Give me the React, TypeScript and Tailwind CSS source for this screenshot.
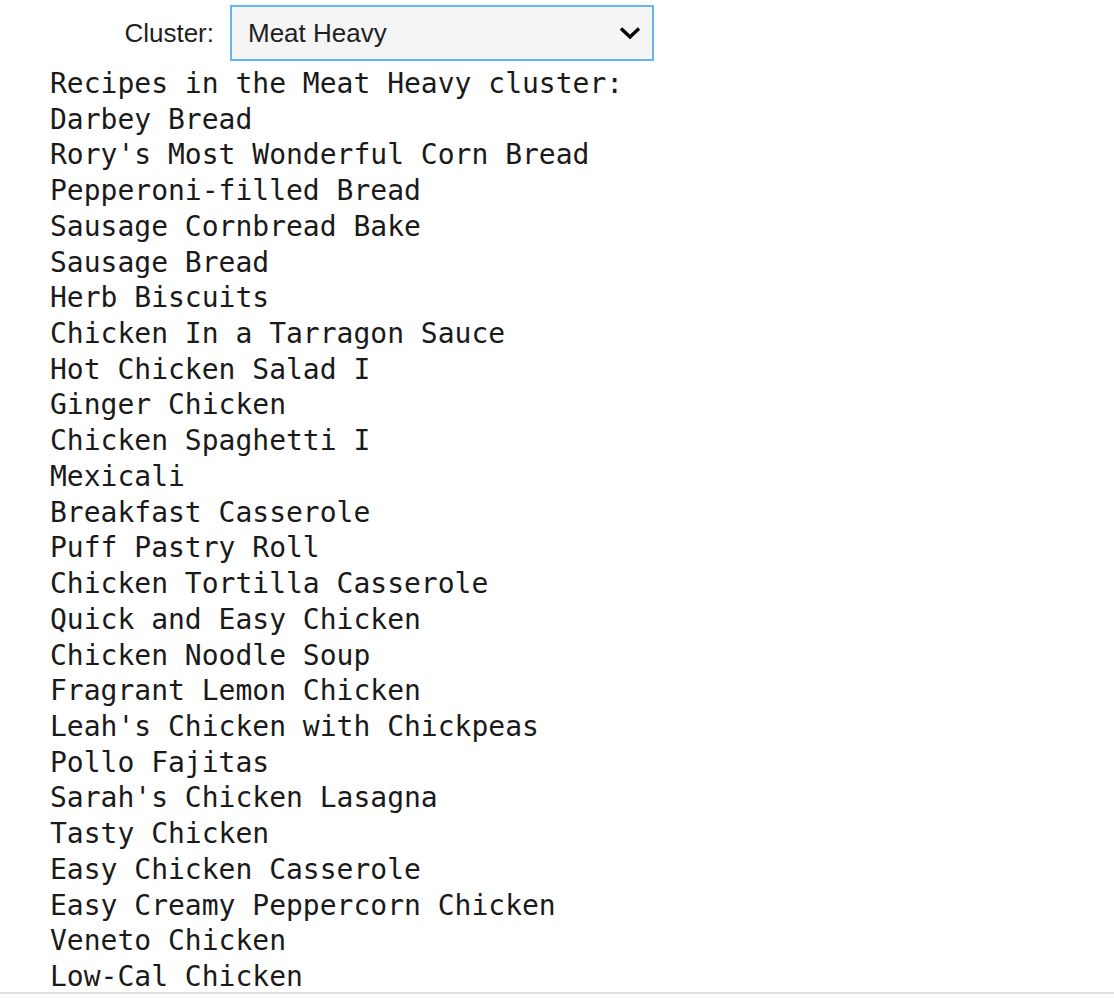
import React from 'react';

const recipes: string[] = [
  'Darbey Bread',
  "Rory's Most Wonderful Corn Bread",
  'Pepperoni-filled Bread',
  'Sausage Cornbread Bake',
  'Sausage Bread',
  'Herb Biscuits',
  'Chicken In a Tarragon Sauce',
  'Hot Chicken Salad I',
  'Ginger Chicken',
  'Chicken Spaghetti I',
  'Mexicali',
  'Breakfast Casserole',
  'Puff Pastry Roll',
  'Chicken Tortilla Casserole',
  'Quick and Easy Chicken',
  'Chicken Noodle Soup',
  'Fragrant Lemon Chicken',
  "Leah's Chicken with Chickpeas",
  'Pollo Fajitas',
  "Sarah's Chicken Lasagna",
  'Tasty Chicken',
  'Easy Chicken Casserole',
  'Easy Creamy Peppercorn Chicken',
  'Veneto Chicken',
  'Low-Cal Chicken',
];

export default function App() {
  return (
    <div className="w-[1114px] h-[998px] overflow-hidden bg-white">
      <div className="flex items-center pt-[5px] font-['Liberation_Sans',Arial,sans-serif] text-[26px]">
        <label className="w-[214px] text-right text-[#1f1f1f]">Cluster:</label>
        <div className="ml-4 flex h-[56px] w-[424px] items-center justify-between border-2 border-[#64b5f6] bg-[#f5f5f5] pl-4 pr-[10px] text-[#1f1f1f]">
          <span>Meat Heavy</span>
          <svg width="24" height="16" viewBox="0 0 24 16" fill="none">
            <path d="M3 3.5 L12 12 L21 3.5" stroke="#000" strokeWidth="3.4" />
          </svg>
        </div>
      </div>
      <div className="mt-[5px] pl-[50px] font-['DejaVu_Sans_Mono',Menlo,monospace] text-[28px] leading-[35.72px] text-[#1a1a1a]">
        <div>Recipes in the Meat Heavy cluster:</div>
        {recipes.map((name) => (
          <div key={name} className="whitespace-pre">{name}</div>
        ))}
      </div>
      <div className="-mt-[3px] border-t-2 border-[#e0e0e0]" />
    </div>
  );
}
